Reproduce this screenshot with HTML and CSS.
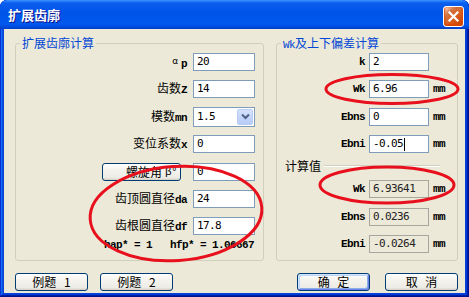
FILE: index.html
```html
<!DOCTYPE html>
<html lang="zh-CN">
<head>
    <meta charset="UTF-8">
    <meta name="viewport" content="width=device-width, initial-scale=1.0">
    <title>扩展齿廓</title>
    <link rel="stylesheet" href="styles.css">
</head>
<body>

<div class="window">
    <div class="titlebar">
        <span class="title">扩展齿廓</span>
        <div class="close">
            <svg width="19" height="19" viewBox="0 0 19 19"><path d="M5.5 5.5 L13.5 13.5 M13.5 5.5 L5.5 13.5" stroke="#fff" stroke-width="2.2" stroke-linecap="square"/></svg>
        </div>
    </div>

    <div class="client">
        <div class="groups">
            <!-- 左侧: 扩展齿廓计算 -->
            <div class="group group-left">
                <div class="legend">扩展齿廓计算</div>
                <div class="rows">
                    <div class="label"><span class="alpha">α</span><span class="lat">p</span></div>
                    <div class="edit">20</div>

                    <div class="label">齿数<span class="lat">Z</span></div>
                    <div class="edit">14</div>

                    <div class="label">模数<span class="lat">mn</span></div>
                    <div class="edit combo">
                        <span>1.5</span>
                        <span class="drop"><svg width="9" height="7" viewBox="0 0 9 7"><path d="M1 1.5 L4.5 5 L8 1.5" fill="none" stroke="#4D6185" stroke-width="2"/></svg></span>
                    </div>

                    <div class="label">变位系数<span class="lat">x</span></div>
                    <div class="edit">0</div>

                    <button class="btn btn-beta">螺旋角<span class="lat">β°</span></button>
                    <div class="edit">0</div>

                    <div class="label">齿顶圆直径<span class="lat">da</span></div>
                    <div class="edit">24</div>

                    <div class="label">齿根圆直径<span class="lat">df</span></div>
                    <div class="edit">17.8</div>
                </div>
                <div class="coef lat">hap* = 1   hfp* = 1.06667</div>
            </div>

            <!-- 右侧: Wk及上下偏差计算 -->
            <div class="group group-right">
                <div class="legend"><span class="lat thin">Wk</span>及上下偏差计算</div>
                <div class="rows rows-unit">
                    <div class="label lat">k</div>
                    <div class="edit">2</div>
                    <div></div>

                    <div class="label lat">Wk</div>
                    <div class="edit">6.96</div>
                    <div class="unit lat">mm</div>

                    <div class="label lat">Ebns</div>
                    <div class="edit">0</div>
                    <div class="unit lat">mm</div>

                    <div class="label lat">Ebni</div>
                    <div class="edit">-0.05<span class="caret"></span></div>
                    <div class="unit lat">mm</div>
                </div>

                <div class="subhead">计算值</div>

                <div class="rows rows-unit">
                    <div class="label lat">Wk</div>
                    <div class="edit readonly">6.93641</div>
                    <div class="unit lat">mm</div>

                    <div class="label lat">Ebns</div>
                    <div class="edit readonly">0.0236</div>
                    <div class="unit lat">mm</div>

                    <div class="label lat">Ebni</div>
                    <div class="edit readonly">-0.0264</div>
                    <div class="unit lat">mm</div>
                </div>
            </div>
        </div>

        <div class="footer">
            <div class="btn-group">
                <button class="btn">例题 1</button>
                <button class="btn">例题 2</button>
            </div>
            <div class="btn-group btn-group-right">
                <button class="btn btn-default">确 定</button>
                <button class="btn">取 消</button>
            </div>
        </div>
    </div>

    <!-- 红色圈注 -->
    <svg class="marks" width="469" height="297" viewBox="0 0 469 297">
        <ellipse cx="392" cy="89" rx="66" ry="14.5" fill="none" stroke="#E8101C" stroke-width="3"/>
        <ellipse cx="387" cy="185" rx="67" ry="18" fill="none" stroke="#E8101C" stroke-width="3"/>
        <ellipse cx="176" cy="213.5" rx="86" ry="47" fill="none" stroke="#E8101C" stroke-width="3" transform="rotate(-4 176 213.5)"/>
    </svg>
</div>

</body>
</html>
```

FILE: styles.css
```css
* {
    box-sizing: border-box;
}
body {
    margin: 0;
    background-color: #fff;
    font-family: "Noto Sans CJK SC", sans-serif;
    font-size: 12px;
    color: #000;
}

/* 窗口外框 */
.window {
    position: relative;
    width: 469px;
    height: 297px;
    display: flex;
    flex-direction: column;
    padding: 0 4px 4px;
    background-color: #0842d8;
    border-radius: 7px 7px 0 0;
    box-shadow: inset -1px -1px #00138c, inset 1px 1px #0831d9, inset -2px -2px #001ea0, inset 2px 2px #166aee, inset -3px -3px #003bda, inset 3px 3px #0855dd;
    overflow: hidden;
}
.titlebar {
    height: 29px;
    margin: 0 -4px;
    padding: 0 5px 0 8px;
    display: flex;
    justify-content: space-between;
    align-items: center;
    border-radius: 7px 7px 0 0;
    background: linear-gradient(180deg, #3d95ff 0%, #0a5fef 10%, #0054e6 40%, #0058ee 85%, #004ad9 93%, #003dc8 100%);
}
.title {
    color: #fff;
    font-weight: bold;
    font-size: 13px;
    line-height: 16px;
    text-shadow: 1px 1px #0f1089;
}
.close {
    width: 21px;
    height: 21px;
    margin-top: 4px;
    display: flex;
    align-items: center;
    justify-content: center;
    border: 1px solid #fff;
    border-radius: 3px;
    background-image: radial-gradient(circle at 90% 90%, #cc4600 0, #dc6527 55%, #cd7546 70%, #ffccb2 90%, #fff 100%);
    box-shadow: inset 0 -1px 2px 1px #da4600;
}

/* 客户区 */
.client {
    flex: 1;
    display: flex;
    flex-direction: column;
    padding: 14px 7px 2px 11px;
    background-color: #ece9d8;
}
.groups {
    display: flex;
    gap: 12px;
    height: 218px;
}
.group {
    display: flex;
    flex-direction: column;
    border: 1px solid #d0d0bf;
    border-radius: 3px;
    padding: 0 8px;
}
.group-left {
    width: 249px;
}
.group-right {
    flex: 1;
    padding-right: 11px;
}
.legend {
    align-self: flex-start;
    margin: -8px 0 0 -4px;
    padding: 0 2px;
    height: 14px;
    line-height: 14px;
    background-color: #ece9d8;
    color: #0046d5;
    white-space: nowrap;
}

.rows {
    display: grid;
    grid-template-columns: 1fr 62px;
    grid-auto-rows: 18px;
    column-gap: 6px;
    row-gap: 9.4px;
    align-items: center;
    margin-top: 3px;
}
.rows-unit {
    grid-template-columns: 1fr 60px 13px;
    column-gap: 4px;
}
.label {
    text-align: right;
    line-height: 18px;
    white-space: nowrap;
}
.lat {
    font-family: "Liberation Mono", monospace;
    font-weight: bold;
    font-size: 11px;
    letter-spacing: -0.6px;
}
.lat.thin {
    font-weight: normal;
}
.alpha {
    font-size: 9px;
    vertical-align: 3px;
    margin-right: 3px;
}
.unit {
    line-height: 18px;
}

/* 编辑框 */
.edit {
    height: 18px;
    display: flex;
    align-items: center;
    padding-left: 3px;
    border: 1px solid #7f9db9;
    background-color: #fff;
    font-family: "DejaVu Sans Mono", monospace;
    font-size: 11px;
    letter-spacing: -0.6px;
    line-height: 16px;
    white-space: nowrap;
}
.edit.readonly {
    border-color: #a8a79f;
    background-color: #ece9d8;
    color: #222;
}
.edit.combo {
    height: 20px;
    justify-content: space-between;
    padding-right: 1px;
}
.drop {
    width: 16px;
    height: 16px;
    display: flex;
    align-items: center;
    justify-content: center;
    border-radius: 2px;
    background: linear-gradient(180deg, #d5e1fc, #b7cbf6);
    border: 1px solid #b9cdf7;
}
.caret {
    display: inline-block;
    width: 1px;
    height: 13px;
    margin-left: 1px;
    background-color: #000;
}

.coef {
    margin-top: 3px;
    line-height: 14px;
    text-align: right;
    white-space: pre;
    padding-right: 1px;
}

.subhead {
    display: flex;
    align-items: center;
    gap: 3px;
    height: 14px;
    line-height: 14px;
    margin: 6px 0 4px;
}
.subhead::after {
    content: "";
    flex: 1;
    margin-right: 6px;
    border-top: 1px solid #d0d0bf;
    border-bottom: 1px solid #fff;
}

/* 按钮 */
.btn {
    width: 73px;
    height: 18px;
    padding: 0;
    display: flex;
    align-items: center;
    justify-content: center;
    border: 1px solid #003c74;
    border-radius: 3px;
    background: linear-gradient(180deg, #fff 0%, #f5f4ef 35%, #ecebe6 85%, #d6d0c5 100%);
    font-family: "Noto Sans CJK SC", sans-serif;
    font-size: 12px;
    line-height: 16px;
    word-spacing: 5px;
    color: #000;
    white-space: pre;
}
.btn-default {
    box-shadow: inset 1px 1px #cee7ff, inset -1px -1px #6982ee, inset 2px 2px #bcd4f6, inset -2px -2px #89ade4;
}
.btn-beta {
    width: 79px;
    justify-self: end;
    margin-right: 6px;
    justify-content: flex-end;
    padding-right: 3px;
}
.btn-beta .lat {
    font-weight: normal;
    margin-left: 3px;
}

.footer {
    display: flex;
    justify-content: space-between;
    margin-top: 12px;
}
.btn-group {
    display: flex;
    gap: 12px;
}
.btn-group-right {
    gap: 15px;
}

.marks {
    position: absolute;
    left: 0;
    top: 0;
    pointer-events: none;
}
```
